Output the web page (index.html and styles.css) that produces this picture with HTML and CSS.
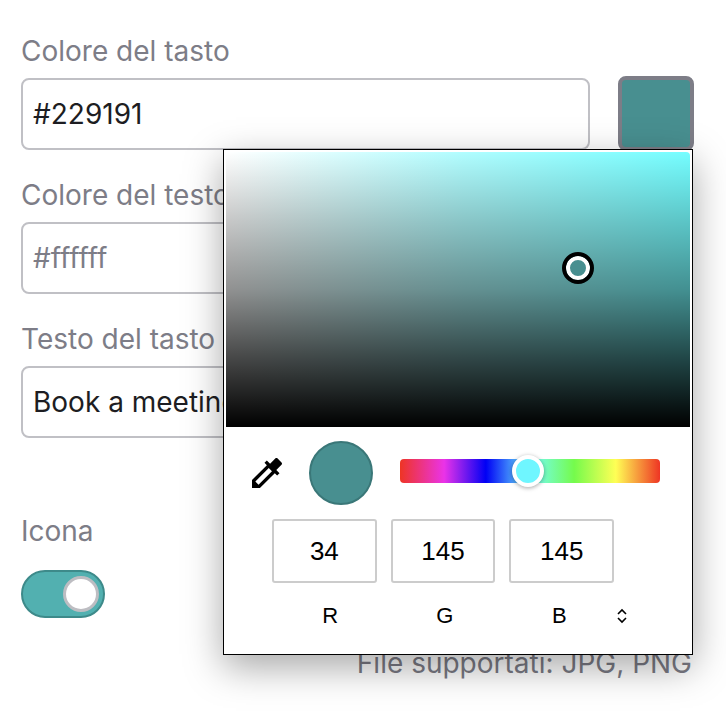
FILE: index.html
```html
<!DOCTYPE html>
<html lang="en">
<head>
  <meta charset="UTF-8" />
  <title>Colore del tasto</title>
  <link rel="stylesheet" href="styles.css">
</head>
<body>
  <div class="form">
    <div class="field">
      <label class="label">Colore del tasto</label>
      <div class="field-row">
        <input class="text-input" type="text" value="#229191" />
        <div class="swatch"></div>
      </div>
    </div>

    <div class="field field-short">
      <label class="label">Colore del testo</label>
      <input class="text-input" type="text" placeholder="#ffffff" />
    </div>

    <div class="field field-short">
      <label class="label">Testo del tasto</label>
      <input class="text-input" type="text" value="Book a meeting" />
    </div>

    <div class="field field-icon">
      <label class="label label-icon">Icona</label>
      <div class="toggle"><div class="toggle-knob"></div></div>
    </div>

    <p class="hint">File supportati: JPG, PNG</p>
  </div>

  <!-- Color picker popup -->
  <div class="picker">
    <div class="picker-area">
      <div class="picker-marker"></div>
    </div>

    <div class="picker-tools">
      <svg class="dropper" viewBox="0 0 24 24" width="40" height="40">
        <path d="M20.71 5.63l-2.34-2.34c-.39-.39-1.02-.39-1.41 0l-3.12 3.12-1.93-1.91-1.41 1.41 1.42 1.42L3 16.25V21h4.75l8.92-8.92 1.42 1.42 1.41-1.41-1.92-1.92 3.12-3.12c.4-.4.4-1.03.01-1.42zM6.92 19L5 17.08l8.06-8.06 1.92 1.92L6.92 19z" />
      </svg>
      <div class="preview"></div>
      <div class="hue">
        <div class="hue-thumb"></div>
      </div>
    </div>

    <div class="rgb-inputs">
      <div class="rgb-box">34</div>
      <div class="rgb-box">145</div>
      <div class="rgb-box">145</div>
    </div>

    <div class="rgb-labels">
      <span class="rgb-label">R</span>
      <span class="rgb-label">G</span>
      <span class="rgb-label">B</span>
      <svg class="chevrons" viewBox="0 0 10 16" width="10" height="16">
        <path d="M1 6l4-4 4 4M1 10l4 4 4-4" />
      </svg>
    </div>
  </div>
</body>
</html>
```

FILE: styles.css
```css
* {
  box-sizing: border-box;
}

body {
  margin: 0;
  height: 728px;
  overflow: hidden;
  position: relative;
  background-color: #fff;
  font-family: 'Inter', sans-serif;
  color: #1d1d22;
}

.form {
  padding: 33px 32px 0 21px;
}

.field {
  margin-bottom: 27px;
}

.field-short {
  padding-right: 104px;
}

.label {
  display: block;
  height: 36px;
  line-height: 36px;
  margin-bottom: 9px;
  font-size: 28px;
  color: #7d7d87;
}

.label-icon {
  margin-bottom: 21px;
}

.field-row {
  display: flex;
  align-items: center;
  gap: 28px;
  height: 72px;
}

.text-input {
  display: block;
  flex: 1;
  width: 100%;
  height: 72px;
  padding: 0 10px;
  border: 2px solid #c0c0c5;
  border-radius: 8px;
  outline: none;
  background: #fff;
  font-family: inherit;
  font-size: 28px;
  color: #1d1d22;
}

.text-input::placeholder {
  color: #7d7d87;
  opacity: 1;
}

.swatch {
  width: 76px;
  height: 75px;
  margin: -2px 0 -1px;
  border: 4px solid #7d7d87;
  border-radius: 8px;
  background-color: #488f90;
}

.field-icon {
  margin-top: 75px;
  margin-bottom: 0;
}

.toggle {
  display: flex;
  align-items: center;
  justify-content: flex-end;
  width: 84px;
  height: 48px;
  padding-right: 4px;
  border: 2px solid #3d8a8a;
  border-radius: 24px;
  background-color: #52b0b0;
}

.toggle-knob {
  width: 36px;
  height: 36px;
  border: 3px solid #bdbdc2;
  border-radius: 50%;
  background-color: #fff;
}

.hint {
  margin: 30px 2px 0 0;
  line-height: 30px;
  text-align: right;
  font-size: 28px;
  color: #7b7b85;
}

.picker {
  position: absolute;
  left: 223px;
  top: 149px;
  width: 470px;
  height: 506px;
  padding: 2px 2px 0;
  border: 1px solid #000;
  background-color: #fff;
  box-shadow: 0 12px 36px rgba(0, 0, 0, 0.35);
  font-family: 'Liberation Sans', sans-serif;
  color: #000;
}

.picker-area {
  position: relative;
  height: 275px;
  border-radius: 4px 4px 0 0;
  background:
    linear-gradient(to bottom, transparent 0%, rgba(0, 0, 0, 0.22) 25%, rgba(0, 0, 0, 0.43) 50%, rgba(0, 0, 0, 0.72) 75%, #000 100%),
    linear-gradient(to right, #fff, #b2fdff 50%, #74fdff);
}

.picker-marker {
  position: absolute;
  left: 336px;
  top: 100px;
  width: 32px;
  height: 32px;
  border: 4px solid #000;
  border-radius: 50%;
  background-color: #488f90;
  box-shadow: inset 0 0 0 4px #fff;
}

.picker-tools {
  display: flex;
  align-items: center;
  height: 92px;
  padding-left: 21px;
}

.dropper {
  margin-right: 22px;
}

.preview {
  width: 64px;
  height: 64px;
  margin-right: 27px;
  border: 2px solid #3a7778;
  border-radius: 50%;
  background-color: #488f90;
}

.hue {
  position: relative;
  width: 260px;
  height: 24px;
  margin-top: -4px;
  border-radius: 4px;
  background: linear-gradient(to right, #ee3524 0%, #ea33e8 17%, #0000f5 33%, #74fcff 50%, #75fb4c 67%, #ffff55 83%, #ee3524 100%);
}

.hue-thumb {
  position: absolute;
  left: 112px;
  top: -4px;
  width: 32px;
  height: 32px;
  border: 4px solid #fff;
  border-radius: 50%;
  background-color: #6ff6ff;
  box-shadow: 0 1px 4px rgba(0, 0, 0, 0.35);
}

.rgb-inputs {
  display: flex;
  gap: 14px;
  padding-left: 46px;
}

.rgb-box {
  width: 104.7px;
  height: 64px;
  line-height: 60px;
  border: 2px solid #ccc;
  border-radius: 3px;
  text-align: center;
  font-size: 26px;
}

.rgb-labels {
  display: flex;
  align-items: center;
  height: 30px;
  margin-top: 18px;
  padding-left: 47px;
}

.rgb-label {
  width: 114.5px;
  text-align: center;
  font-size: 22px;
}

.chevrons {
  fill: none;
  stroke: #000;
  stroke-width: 1.6;
}

.dropper path {
  fill: #000;
}
```
